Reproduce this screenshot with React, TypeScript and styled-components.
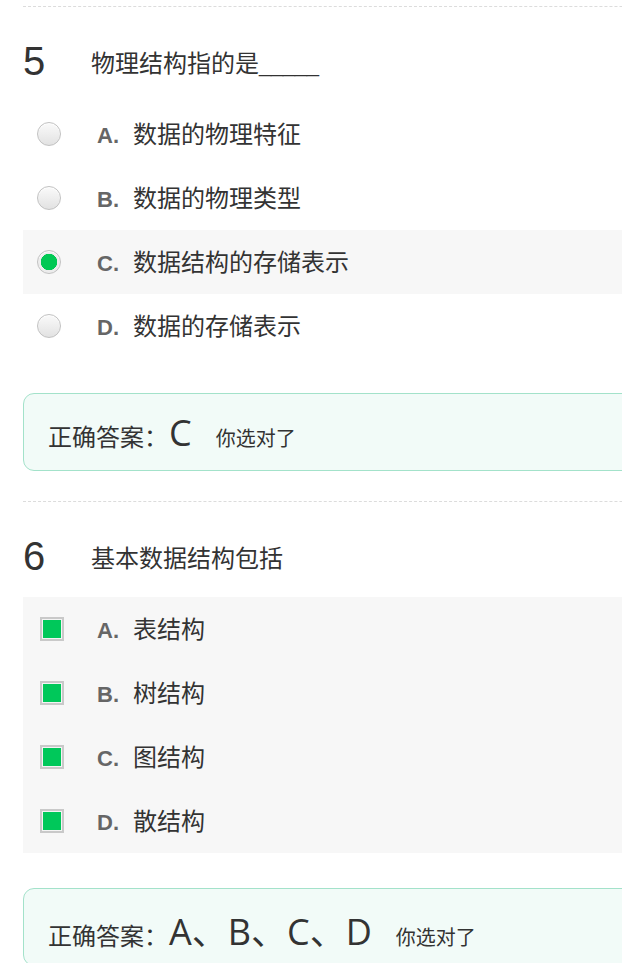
import styled, { createGlobalStyle } from "styled-components";

const GlobalStyle = createGlobalStyle`
    html, body {
        margin: 0;
        padding: 0;
        background: #fff;
        overflow: hidden;
    }
    body {
        font-family: "Noto Sans CJK SC", "Liberation Sans", sans-serif;
        color: #333;
    }
`;

const Page = styled.div`
    padding: 6px 0 0 23px;
    width: 800px;
`;

const QuestionBlock = styled.section`
    border-top: 1px dashed #dcdcdc;
    padding-bottom: 30px;
`;

const TitleRow = styled.div`
    display: flex;
    align-items: center;
    height: 50px;
    margin-top: 29px;
    margin-bottom: 16px;
`;

const QuestionNo = styled.span`
    width: 68px;
    font-family: "Liberation Sans", Arial, sans-serif;
    font-size: 40px;
    line-height: 50px;
    color: #333;
`;

const QuestionText = styled.span`
    font-size: 24px;
    color: #333;
    .blank {
        font-family: "Liberation Sans", Arial, sans-serif;
        font-size: 22px;
        letter-spacing: -0.3px;
    }
`;

const OptionList = styled.div`
    display: flex;
    flex-direction: column;
`;

const OptionRow = styled.div<{ $active: boolean }>`
    display: flex;
    align-items: center;
    height: 64px;
    background: ${p => p.$active ? "#f7f7f7" : "transparent"};
`;

const IconCell = styled.div<{ $indent: number }>`
    width: 74px;
    box-sizing: border-box;
    padding-left: ${p => p.$indent}px;
    display: flex;
    align-items: center;
`;

const Radio = styled.span<{ $checked: boolean }>`
    width: 24px;
    height: 24px;
    box-sizing: border-box;
    border-radius: 50%;
    border: 1px solid #c2c2c2;
    background: ${p => p.$checked
        ? "radial-gradient(circle, #00c853 0 8px, #ececec 8.5px 100%)"
        : "linear-gradient(#fafafa, #e2e2e2)"};
    box-shadow: inset 0 1px 1px rgba(255, 255, 255, 0.9);
`;

const Checkbox = styled.span`
    width: 24px;
    height: 24px;
    box-sizing: border-box;
    border: 2px solid #c9c9c9;
    padding: 1px;
    background: #f4f4f4;
    display: flex;
    &::after {
        content: "";
        flex: 1;
        background: #00c85a;
    }
`;

const OptionLabel = styled.div`
    display: flex;
    align-items: baseline;
    padding-bottom: 4px;
`;

const OptionLetter = styled.span`
    font-family: "Liberation Sans", Arial, sans-serif;
    font-weight: bold;
    font-size: 22px;
    color: #666;
    width: 36px;
`;

const OptionText = styled.span`
    font-size: 24px;
    color: #333;
`;

const AnswerBox = styled.div`
    margin-top: 35px;
    height: 78px;
    box-sizing: border-box;
    border: 1px solid #a3e2ca;
    border-radius: 11px;
    background: #f2fbf8;
    padding-left: 24px;
    display: flex;
    align-items: baseline;
    padding-top: 14px;
`;

const AnswerLabel = styled.span`
    font-size: 24px;
    color: #333;
`;

const AnswerValue = styled.span`
    font-family: "Open Sans", "Noto Sans CJK SC", sans-serif;
    font-size: 36px;
    color: #333;
    margin: 0 24px 0 1px;
`;

const AnswerNote = styled.span`
    font-size: 20px;
    color: #333;
`;

type Option = { letter: string; text: string; checked: boolean };

type Question = {
    no: number;
    title: string;
    blank?: boolean;
    multi: boolean;
    options: Option[];
    answer: string;
};

const questions: Question[] = [
    {
        no: 5,
        title: "物理结构指的是",
        blank: true,
        multi: false,
        options: [
            { letter: "A.", text: "数据的物理特征", checked: false },
            { letter: "B.", text: "数据的物理类型", checked: false },
            { letter: "C.", text: "数据结构的存储表示", checked: true },
            { letter: "D.", text: "数据的存储表示", checked: false },
        ],
        answer: "C",
    },
    {
        no: 6,
        title: "基本数据结构包括",
        multi: true,
        options: [
            { letter: "A.", text: "表结构", checked: true },
            { letter: "B.", text: "树结构", checked: true },
            { letter: "C.", text: "图结构", checked: true },
            { letter: "D.", text: "散结构", checked: true },
        ],
        answer: "A、B、C、D",
    },
];

export default function App() {
    return <>
        <GlobalStyle />
        <Page>
            {questions.map(q => <QuestionBlock key={q.no}>
                <TitleRow>
                    <QuestionNo>{q.no}</QuestionNo>
                    <QuestionText>
                        {q.title}
                        {q.blank && <span className="blank">_____</span>}
                    </QuestionText>
                </TitleRow>
                <OptionList>
                    {q.options.map(o => <OptionRow key={o.letter} $active={o.checked}>
                        <IconCell $indent={q.multi ? 17 : 14}>
                            {q.multi ? <Checkbox /> : <Radio $checked={o.checked} />}
                        </IconCell>
                        <OptionLabel>
                            <OptionLetter>{o.letter}</OptionLetter>
                            <OptionText>{o.text}</OptionText>
                        </OptionLabel>
                    </OptionRow>)}
                </OptionList>
                <AnswerBox>
                    <AnswerLabel>正确答案：</AnswerLabel>
                    <AnswerValue>{q.answer}</AnswerValue>
                    <AnswerNote>你选对了</AnswerNote>
                </AnswerBox>
            </QuestionBlock>)}
        </Page>
    </>;
}
